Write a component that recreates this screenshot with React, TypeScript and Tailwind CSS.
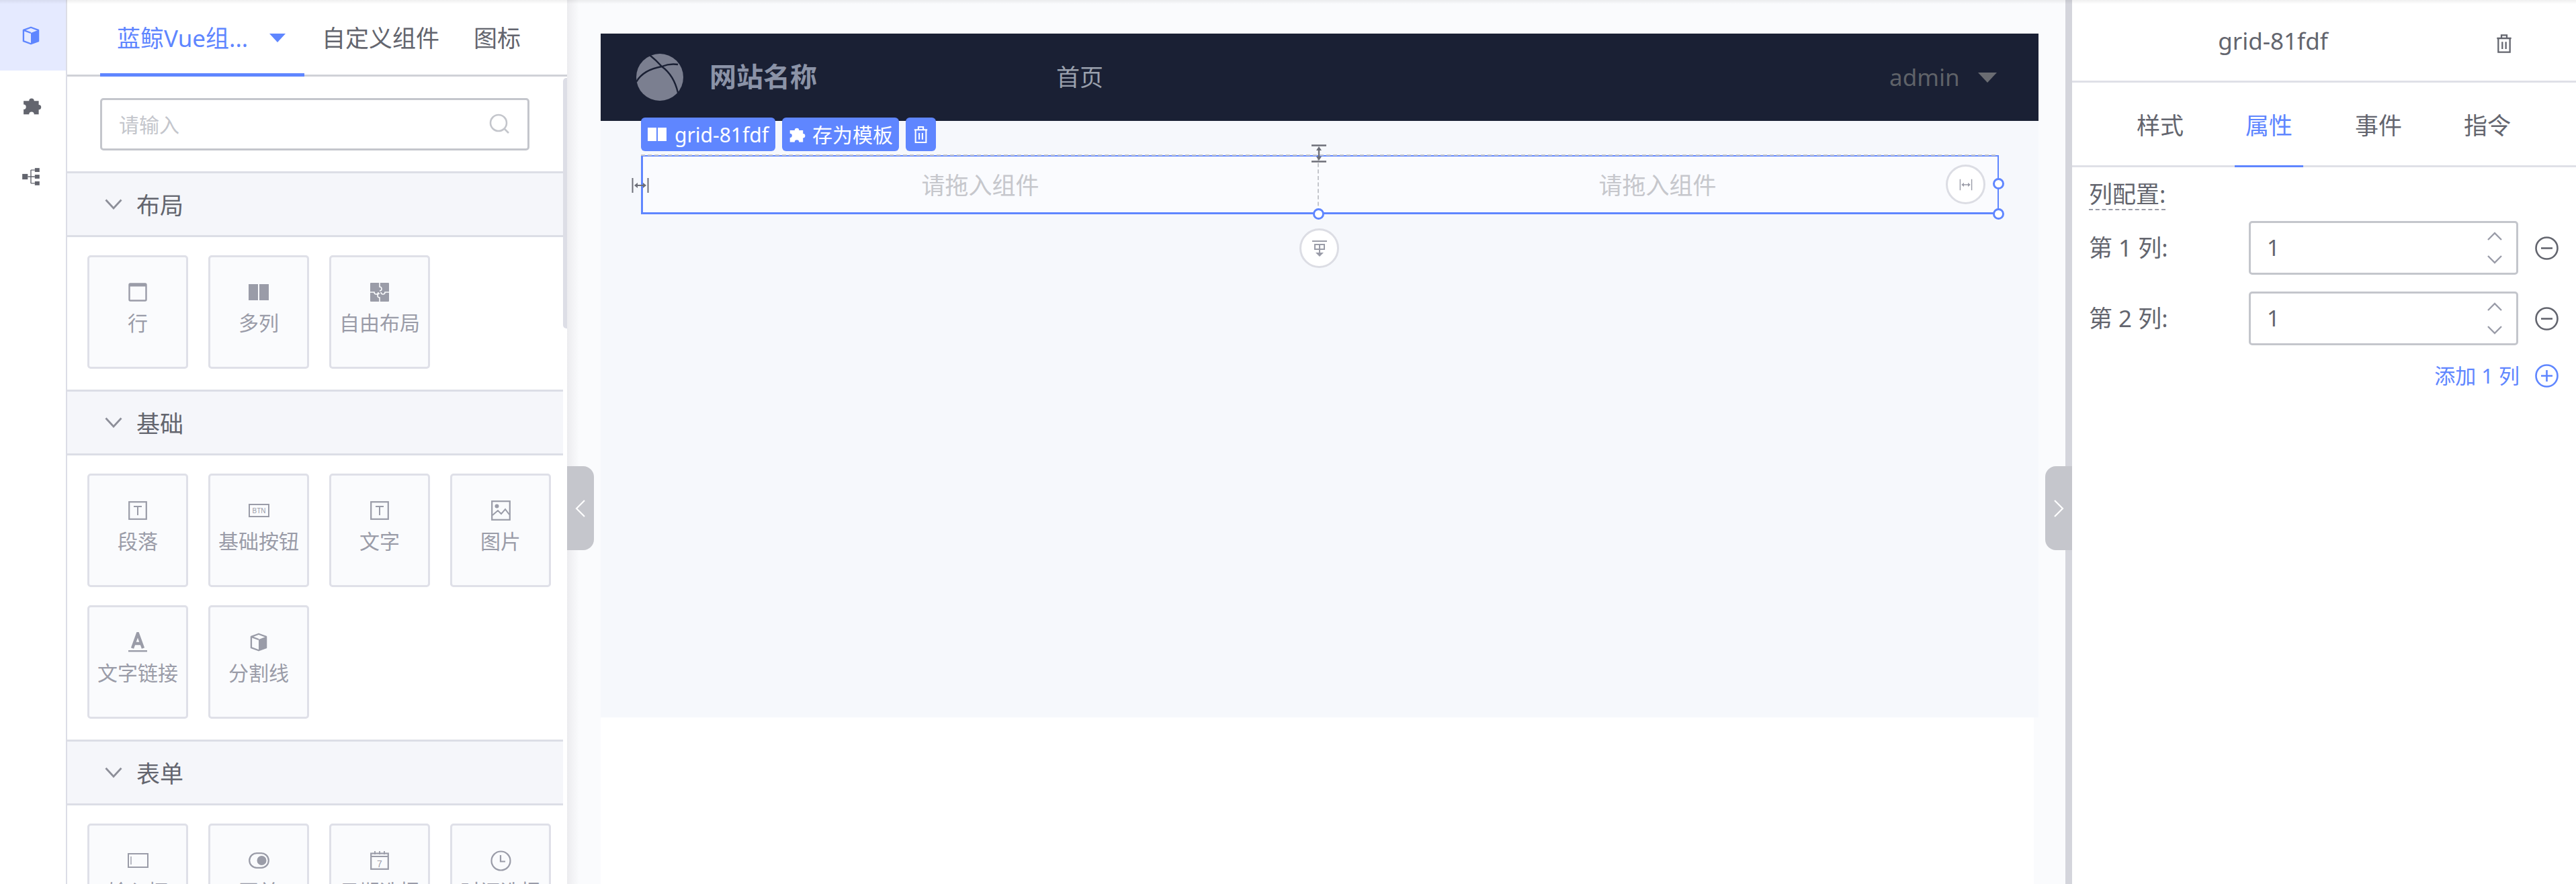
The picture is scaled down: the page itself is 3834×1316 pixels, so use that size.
import { ReactNode } from "react";

const font = "font-['Noto_Sans','Noto_Sans_CJK_SC',sans-serif]";

function Glyph({ size = 27, className = "", children, box = 24 }: { size?: number; className?: string; children: ReactNode; box?: number }) {
  return (
    <svg width={size} height={size} viewBox={`0 0 ${box} ${box}`} className={className} fill="none">
      {children}
    </svg>
  );
}

function Cube({ size = 27, className = "" }: { size?: number; className?: string }) {
  return (
    <Glyph size={size} className={className}>
      <path d="M12 1.5 21.5 5v14L12 22.5 2.5 19V5z" stroke="currentColor" strokeWidth="2" strokeLinejoin="round" />
      <path d="M12 8.6 21.5 5v14L12 22.5z" fill="currentColor" />
      <path d="M2.5 5 12 8.6" stroke="currentColor" strokeWidth="2" />
    </Glyph>
  );
}

function Puzzle({ size = 28, className = "" }: { size?: number; className?: string }) {
  return (
    <Glyph size={size} className={className}>
      <path
        d="M2.5 6.5H9a3 3 0 1 1 6 0h5.5v4.6a2.9 2.9 0 1 1 0 5.8v5.6H15a3 3 0 0 0-6 0H2.5V16.6a2.9 2.9 0 0 0 0-5.8z"
        fill="currentColor"
      />
    </Glyph>
  );
}

function Tree({ size = 28, className = "" }: { size?: number; className?: string }) {
  return (
    <Glyph size={size} className={className}>
      <rect x="1" y="8.5" width="7" height="7" fill="currentColor" />
      <rect x="17" y="1" width="6" height="5" fill="currentColor" />
      <rect x="17" y="9.5" width="6" height="5" fill="currentColor" />
      <rect x="17" y="18" width="6" height="5" fill="currentColor" />
      <path d="M8 12h9M12 3.5h5M12 20.5h5M12 3.5v17" stroke="currentColor" strokeWidth="1.2" />
    </Glyph>
  );
}

function Trash({ size = 28, className = "" }: { size?: number; className?: string }) {
  return (
    <Glyph size={size} className={className}>
      <path d="M4 6h16M9 6V2.5h6V6M5.5 6v15.5h13V6M10 10v8M14 10v8" stroke="currentColor" strokeWidth="1.7" />
    </Glyph>
  );
}

function Columns({ className = "" }: { className?: string }) {
  return (
    <svg width="28" height="20" viewBox="0 0 28 20" className={className}>
      <rect width="13" height="20" fill="currentColor" />
      <rect x="15" width="13" height="20" fill="currentColor" />
    </svg>
  );
}

function Chevron({ dir, className = "" }: { dir: "up" | "down"; className?: string }) {
  return (
    <svg width="24" height="14" viewBox="0 0 24 14" fill="none" className={className}>
      <path d={dir === "up" ? "M2 12 12 2l10 10" : "M2 2l10 10L22 2"} stroke="currentColor" strokeWidth="2.4" />
    </svg>
  );
}

function CardIcon({ kind }: { kind: string }) {
  const c = "text-[#9a9ca8]";
  switch (kind) {
    case "row":
      return (
        <svg width="28" height="28" viewBox="0 0 28 28" fill="none" className={c}>
          <rect x="1.5" y="1.5" width="25" height="25" rx="1.5" stroke="currentColor" strokeWidth="2.4" />
          <rect x="1.5" y="1.5" width="25" height="4" fill="currentColor" />
        </svg>
      );
    case "columns":
      return (
        <svg width="30" height="24" viewBox="0 0 30 24" className={c}>
          <rect width="14" height="24" fill="currentColor" />
          <rect x="16" width="14" height="24" fill="currentColor" />
        </svg>
      );
    case "free":
      return (
        <svg width="28" height="28" viewBox="0 0 28 28" className={c}>
          <rect width="28" height="28" rx="1" fill="currentColor" />
          <path d="M14 0v6a3 3 0 0 1 0 6M14 16a3 3 0 0 0 0 6v6M0 14h6a3 3 0 0 0 6 0M16 14a3 3 0 0 0 6 0h6" stroke="#fafbfd" strokeWidth="1.6" fill="none" />
        </svg>
      );
    case "text":
      return (
        <svg width="28" height="28" viewBox="0 0 28 28" fill="none" className={c}>
          <rect x="1.2" y="1.2" width="25.6" height="25.6" stroke="currentColor" strokeWidth="2.2" />
          <path d="M8 8h12M14 8v13" stroke="currentColor" strokeWidth="2" />
        </svg>
      );
    case "btn":
      return (
        <svg width="31" height="20" viewBox="0 0 31 20" fill="none" className={c}>
          <rect x="1" y="1" width="29" height="18" stroke="currentColor" strokeWidth="2" />
          <text x="15.5" y="14" textAnchor="middle" fontSize="10" fontFamily="Liberation Sans, sans-serif" fill="currentColor">BTN</text>
        </svg>
      );
    case "image":
      return (
        <svg width="29" height="30" viewBox="0 0 29 30" fill="none" className={c}>
          <rect x="1.2" y="1.2" width="26.6" height="27.6" stroke="currentColor" strokeWidth="2.2" />
          <circle cx="8.5" cy="8.5" r="3" fill="currentColor" />
          <path d="M2 22l8-7 5 5 6-7 6 8" stroke="currentColor" strokeWidth="2" />
        </svg>
      );
    case "link":
      return (
        <svg width="28" height="30" viewBox="0 0 28 30" fill="none" className={c}>
          <path d="M6 24 14 2l8 22M8.5 17h11" stroke="currentColor" strokeWidth="4.4" />
          <rect y="27" width="28" height="2.4" fill="currentColor" />
        </svg>
      );
    case "cube":
      return <Cube size={28} className={c} />;
    case "input":
      return (
        <svg width="31" height="22" viewBox="0 0 31 22" fill="none" className={c}>
          <rect x="1" y="1" width="29" height="20" stroke="currentColor" strokeWidth="2" />
          <path d="M5 5v12" stroke="currentColor" strokeWidth="1.4" />
        </svg>
      );
    case "switch":
      return (
        <svg width="31" height="24" viewBox="0 0 31 24" fill="none" className={c}>
          <rect x="1.2" y="1.2" width="28.6" height="21.6" rx="10.8" stroke="currentColor" strokeWidth="2.2" />
          <circle cx="19.5" cy="12" r="7" fill="currentColor" />
        </svg>
      );
    case "date":
      return (
        <svg width="28" height="28" viewBox="0 0 28 28" fill="none" className={c}>
          <rect x="1.2" y="3.5" width="25.6" height="23.3" stroke="currentColor" strokeWidth="2.2" />
          <path d="M1 8h26M7 0v5M14 0v5M21 0v5" stroke="currentColor" strokeWidth="1.8" />
          <text x="14" y="23.5" textAnchor="middle" fontSize="14" fontFamily="Liberation Sans, sans-serif" fill="currentColor">7</text>
        </svg>
      );
    default:
      return (
        <svg width="31" height="31" viewBox="0 0 31 31" fill="none" className={c}>
          <circle cx="15.5" cy="15.5" r="14" stroke="currentColor" strokeWidth="2.2" />
          <path d="M15 7v9.5h7" stroke="currentColor" strokeWidth="2.2" />
        </svg>
      );
  }
}

const sections = [
  {
    title: "布局",
    items: [
      ["row", "行"],
      ["columns", "多列"],
      ["free", "自由布局"],
    ],
  },
  {
    title: "基础",
    items: [
      ["text", "段落"],
      ["btn", "基础按钮"],
      ["text", "文字"],
      ["image", "图片"],
      ["link", "文字链接"],
      ["cube", "分割线"],
    ],
  },
  {
    title: "表单",
    items: [
      ["input", "输入框"],
      ["switch", "开关"],
      ["date", "日期选择"],
      ["clock", "时间选择"],
    ],
  },
];

function Section({ title, items }: { title: string; items: string[][] }) {
  return (
    <div>
      <div className="flex h-[98px] items-center border-y-[3px] border-[#dcdee6] bg-[#f5f6fa] pl-[56px] text-[35px] text-[#63656e]">
        <svg width="26" height="16" viewBox="0 0 26 16" fill="none" className="mr-[21px] text-[#8d8f99]">
          <path d="M1.5 1.5 13 14 24.5 1.5" stroke="currentColor" strokeWidth="2.8" />
        </svg>
        <span className="pt-[4px]">{title}</span>
      </div>
      <div className="grid grid-cols-[repeat(4,150px)] gap-x-[30px] gap-y-[27px] pt-[27px] pb-[31px] pl-[30px]">
        {items.map(([kind, label]) => (
          <div key={label} className="flex h-[169px] flex-col items-center rounded-[5px] border-[3px] border-[#dfe0e8] bg-[#fafbfd]">
            <div className="mt-[36px] flex h-[32px] items-center">
              <CardIcon kind={kind} />
            </div>
            <div className="mt-[7px] text-[30px] leading-[46px] whitespace-nowrap text-[#9a9ca8]">{label}</div>
          </div>
        ))}
      </div>
    </div>
  );
}

function LeftPanel() {
  return (
    <div className="relative flex w-[744px] shrink-0 flex-col overflow-hidden bg-white">
      <div className="flex h-[114px] shrink-0 items-center border-b-[3px] border-[#d0d1d7] text-[35px] text-[#63656e]">
        <div className="relative ml-[49px] flex h-[111px] w-[304px] items-center pt-[3px] pl-[25px] text-[#5f86ff]">
          <span>蓝鲸Vue组...</span>
          <span className="absolute top-[50px] left-[252px] h-0 w-0 border-x-[12px] border-t-[13px] border-x-transparent border-t-[#5f86ff]" />
          <span className="absolute bottom-[-3px] left-0 h-[5px] w-full bg-[#5f86ff]" />
        </div>
        <span className="ml-[26px] pt-[3px]">自定义组件</span>
        <span className="ml-[51px] pt-[3px]">图标</span>
      </div>
      <div className="flex h-[141px] shrink-0 items-start pt-[32px] pl-[49px]">
        <div className="flex h-[78px] w-[639px] items-center justify-between rounded-[5px] border-[3px] border-[#c4c6cc] pr-[26px] pl-[25px]">
          <span className="text-[30px] text-[#c4c6cc]">请输入</span>
          <svg width="32" height="32" viewBox="0 0 32 32" fill="none" className="text-[#c4c6cc]">
            <circle cx="15" cy="14" r="12" stroke="currentColor" strokeWidth="2.6" />
            <path d="M24 23l6 6" stroke="currentColor" strokeWidth="2.6" />
          </svg>
        </div>
      </div>
      <div className="w-[738px]">
        {sections.map((s) => (
          <Section key={s.title} title={s.title} items={s.items} />
        ))}
      </div>
      <div className="absolute top-[116px] right-[-4px] h-[373px] w-[10px] rounded-[5px] bg-[#dddee6]" />
    </div>
  );
}

function Handle({ className }: { className: string }) {
  return <span className={`absolute h-[17px] w-[17px] rounded-full border-[3px] border-[#5f86ff] bg-white ${className}`} />;
}

function RoundButton({ className, children }: { className: string; children: ReactNode }) {
  return (
    <div className={`absolute flex h-[59px] w-[59px] items-center justify-center rounded-full border-[3px] border-[#dcdde4] bg-white ${className}`}>
      {children}
    </div>
  );
}

function WidthIcon({ className = "" }: { className?: string }) {
  return (
    <svg width="26" height="24" viewBox="0 0 26 24" fill="none" className={className}>
      <path d="M1.5 1v22M24.5 1v22M6 12h14" stroke="currentColor" strokeWidth="2" />
      <path d="M4 12l5-4v8zM22 12l-5-4v8z" fill="currentColor" />
    </svg>
  );
}

function GridBlock() {
  return (
    <div className="relative ml-[60px] h-[88px] w-[2021px] border-t-[2px] border-r-[2px] border-b-[3px] border-l-[3px] border-[#5f86ff] bg-[#fafbfe]">
      <div className="absolute top-[-3px] left-[-3px] h-0 w-full border-t-2 border-dashed border-[#c4c6cc]" />
      <div className="flex h-full text-[35px] text-[#c6c7cc]">
        <div className="flex w-[1004px] items-center justify-center pt-[3px]">请拖入组件</div>
        <div className="flex flex-1 items-center justify-center border-l-2 border-dashed border-[#c4c6cc] pt-[3px] pr-[2px]">请拖入组件</div>
      </div>
      <WidthIcon className="absolute top-[31px] left-[-17px] text-[#6d6f78]" />
      <svg width="22" height="27" viewBox="0 0 22 27" fill="none" className="absolute top-[-18px] left-[995px] text-[#6d6f78]">
        <path d="M0 1.5h22M0 25.5h22M11 5v17" stroke="currentColor" strokeWidth="2.4" />
        <path d="M11 3l-4 6h8zM11 24l-4-6h8z" fill="currentColor" />
      </svg>
      <RoundButton className="top-[12px] right-[18px]">
        <WidthIcon className="scale-75 text-[#9a9ca8]" />
      </RoundButton>
      <RoundButton className="top-[107px] left-[977px]">
        <svg width="26" height="26" viewBox="0 0 26 26" fill="none" className="text-[#9a9ca8]">
          <path d="M2 2h22M6 7h14v7H6zM13 7v13" stroke="currentColor" strokeWidth="2" />
          <path d="M13 25l-6-6h12z" fill="currentColor" />
        </svg>
      </RoundButton>
      <Handle className="top-[77px] left-[997px]" />
      <Handle className="top-[32px] right-[-10px]" />
      <Handle className="top-[77px] right-[-10px]" />
    </div>
  );
}

function Tag({ className, children }: { className: string; children: ReactNode }) {
  return (
    <div className={`flex h-[50px] items-center justify-center rounded-[6px] bg-[#5f86ff] text-[30px] whitespace-nowrap text-white ${className}`}>
      {children}
    </div>
  );
}

function Canvas() {
  return (
    <div className="relative flex flex-1 flex-col bg-[#fafbfd] pt-[50px]">
      <div className="absolute top-0 bottom-0 left-0 w-[18px] bg-gradient-to-r from-[#ececef] to-transparent" />
      <div className="ml-[50px] flex w-[2140px] flex-1 flex-col">
        <div className="flex h-[130px] shrink-0 items-center bg-[#1a2034] pl-[53px]">
          <svg width="70" height="70" viewBox="0 0 70 70" fill="none">
            <circle cx="35" cy="35" r="35" fill="#7b7f90" />
            <path d="M0 42Q10 24 38 19M20 2Q30 10 38 19Q56 32 62 58M38 19Q50 14 62 16" stroke="#1a2034" strokeWidth="2.4" />
          </svg>
          <span className="ml-[39px] w-[516px] pb-[3px] text-[40px] font-bold text-[#8b93a7]">网站名称</span>
          <span className="text-[35px] text-[#9aa0ad]">首页</span>
          <span className="ml-[1170px] text-[35px] text-[#5f6268]">admin</span>
          <span className="ml-[27px] h-0 w-0 border-x-[14px] border-t-[15px] border-x-transparent border-t-[#6a6c72]" />
        </div>
        <div className="relative h-[888px] shrink-0 bg-[#f6f8fc] pt-[51px]">
          <div className="absolute top-[-5px] left-[60px] flex gap-[10px]">
            <Tag className="w-[200px] gap-[12px]">
              <Columns />
              <span>grid-81fdf</span>
            </Tag>
            <Tag className="w-[174px] gap-[10px]">
              <Puzzle size={26} />
              <span>存为模板</span>
            </Tag>
            <Tag className="w-[45px]">
              <Trash size={29} />
            </Tag>
          </div>
          <GridBlock />
        </div>
        <div className="w-[2133px] flex-1 bg-white" />
      </div>
    </div>
  );
}

function NumberRow({ label }: { label: string }) {
  return (
    <div className="flex h-[80px] items-center text-[35px] text-[#63656e]">
      <span className="w-[238px] whitespace-pre">{label}</span>
      <div className="flex h-[80px] w-[401px] items-center justify-between rounded-[5px] border-[3px] border-[#c4c6cc] pr-[20px] pl-[24px]">
        <span className="text-[33px]">1</span>
        <div className="flex flex-col gap-[20px] text-[#9a9ca8]">
          <Chevron dir="up" />
          <Chevron dir="down" />
        </div>
      </div>
      <svg width="35" height="35" viewBox="0 0 35 35" fill="none" className="ml-[25px]">
        <circle cx="17.5" cy="17.5" r="16" stroke="currentColor" strokeWidth="2.6" />
        <path d="M9 17.5h17" stroke="currentColor" strokeWidth="2.6" />
      </svg>
    </div>
  );
}

function RightPanel() {
  return (
    <div className="flex w-[760px] shrink-0 border-l-[10px] border-[#d4d5dc] bg-white">
      <div className="w-[750px]">
        <div className="relative flex h-[123px] items-center justify-center border-b-[3px] border-[#dfe0e7] pr-[152px] pt-[2px] text-[35px] text-[#63656e]">
          grid-81fdf
          <Trash size={32} className="absolute top-[49px] left-[627px]" />
        </div>
        <div className="flex h-[126px] border-b-[3px] border-[#dfe0e7] pl-[80px] text-[35px] text-[#63656e]">
          {["样式", "属性", "事件", "指令"].map((t) => (
            <div
              key={t}
              className={
                t === "属性"
                  ? "mr-[61px] mb-[-3px] flex w-[102px] items-center justify-center border-b-[3px] border-[#5f86ff] pt-[6px] text-[#5f86ff]"
                  : "mr-[60px] flex w-[102px] items-center justify-center pt-[6px]"
              }
            >
              {t}
            </div>
          ))}
        </div>
        <div className="pl-[25px]">
          <div className="mt-[18px] mb-[16px] w-fit border-b-2 border-dashed border-[#9a9ca8] text-[35px] leading-[44px] text-[#63656e]">列配置:</div>
          <div className="flex flex-col gap-[25px]">
            <NumberRow label="第 1 列:" />
            <NumberRow label="第 2 列:" />
          </div>
          <div className="mt-[28px] flex h-[35px] items-center justify-end pr-[26px] text-[31px] text-[#5f86ff]">
            <span className="mr-[23px]">添加 1 列</span>
            <svg width="35" height="35" viewBox="0 0 35 35" fill="none">
              <circle cx="17.5" cy="17.5" r="16" stroke="currentColor" strokeWidth="2.6" />
              <path d="M9 17.5h17M17.5 9v17" stroke="currentColor" strokeWidth="2.6" />
            </svg>
          </div>
        </div>
      </div>
    </div>
  );
}

export default function App() {
  return (
    <div className={`relative flex h-[1316px] w-[3834px] overflow-hidden bg-white ${font}`}>
      <div className="flex w-[100px] shrink-0 flex-col border-r-[2px] border-[#dcdde6] bg-white">
        <div className="flex h-[105px] items-center justify-center bg-[#e5eaff] pr-[6px] text-[#5f86ff]">
          <Cube size={28} />
        </div>
        <div className="flex h-[105px] items-center justify-center pr-[4px] pb-[2px] text-[#63656e]">
          <Puzzle size={30} />
        </div>
        <div className="flex h-[105px] items-center justify-center pr-[6px] text-[#63656e]">
          <Tree size={28} />
        </div>
      </div>
      <LeftPanel />
      <Canvas />
      <RightPanel />
      <div className="absolute top-0 left-0 h-[6px] w-full bg-gradient-to-b from-[#00000010] to-transparent" />
      <div className="absolute top-[694px] left-[844px] flex h-[125px] w-[40px] items-center justify-center rounded-r-[16px] bg-[#c5c6cc]">
        <svg width="16" height="28" viewBox="0 0 16 28" fill="none">
          <path d="M14 2 2 14l12 12" stroke="white" strokeWidth="2.2" />
        </svg>
      </div>
      <div className="absolute top-[694px] left-[3044px] flex h-[125px] w-[40px] items-center justify-center rounded-l-[16px] bg-[#c5c6cc]">
        <svg width="16" height="28" viewBox="0 0 16 28" fill="none">
          <path d="M2 2l12 12L2 26" stroke="white" strokeWidth="2.2" />
        </svg>
      </div>
    </div>
  );
}
